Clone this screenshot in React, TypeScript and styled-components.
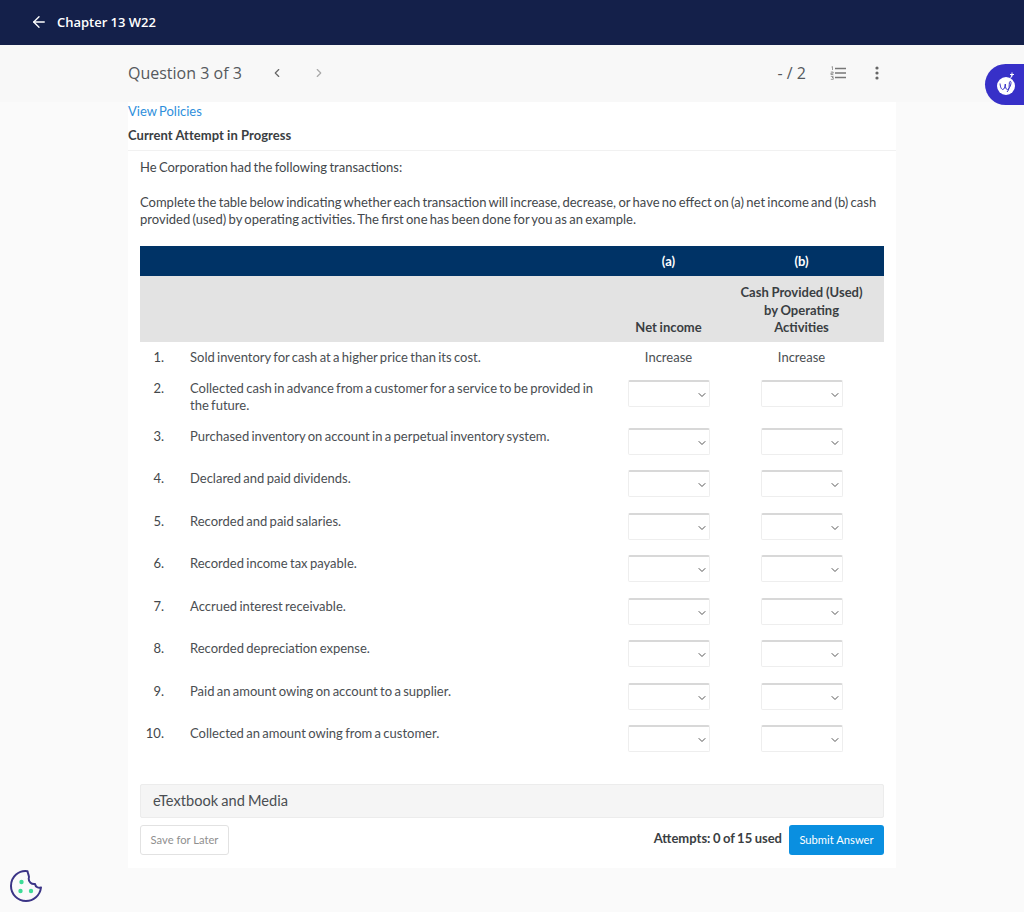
import React from "react";
import styled, { createGlobalStyle } from "styled-components";
import { ArrowLeft, ChevronDown, ChevronLeft, ChevronRight } from "lucide-react";

const GlobalStyle = createGlobalStyle`
  html, body { margin: 0; padding: 0; background: #fafafa; }
  body { font-family: "Lato", "Liberation Sans", sans-serif; color: #43474b; }
  * { box-sizing: border-box; }
`;

const Page = styled.div`
  position: relative;
  width: 1024px;
  height: 912px;
  overflow: hidden;
  background: #fafafa;
`;

const TopBar = styled.header`
  height: 45px;
  background: #14204a;
  display: flex;
  align-items: center;
  gap: 9px;
  padding: 0 0 2px 30px;
  color: #fff;
  font: 600 13px "Open Sans", sans-serif;
  letter-spacing: -0.02px;
`;

const SubBar = styled.div`
  height: 57px;
  background: #f8f8f8;
  padding: 0 143px 2px 128px;
  display: flex;
  align-items: center;
  justify-content: space-between;
`;

const QuestionNav = styled.div`
  display: flex;
  align-items: center;
  color: #55595d;
  font: 400 16px "Open Sans", sans-serif;
`;

const NavButton = styled.span<{ $off?: boolean }>`
  display: flex;
  width: 14px;
  margin-left: 28px;
  color: ${p => (p.$off ? "#a9a9a9" : "#666")};
`;

const Tools = styled.div`
  display: flex;
  align-items: center;
  color: #55595d;
  font: 400 16px "Open Sans", sans-serif;
`;

const Score = styled.span`
  margin-right: 24px;
`;

const ListIcon = styled.svg`
  display: block;
`;

const DotsIcon = styled.svg`
  display: block;
  margin: 0 2px 0 29px;
`;

const Sheet = styled.main`
  width: 768px;
  height: 766px;
  margin-left: 128px;
  background: #fff;
`;

const PolicyLink = styled.a`
  display: block;
  height: 21px;
  font-size: 13px;
  line-height: 18px;
  word-spacing: -1px;
  color: #2f8fdc;
`;

const AttemptHeading = styled.div`
  height: 28px;
  padding-top: 3px;
  border-bottom: 1px solid #f1f1f1;
  font-size: 13px;
  font-weight: 700;
  line-height: 18px;
  letter-spacing: 0.04px;
  color: #3a3e42;
`;

const Content = styled.div`
  padding: 0 12px;
  font-size: 13px;
  line-height: 17.5px;
  word-spacing: -1px;
`;

const Intro = styled.p`
  margin: 8px 0 17px;
`;

const Lead = styled.p`
  margin: 0 0 17px;
  width: 740px;
`;

const TableHead = styled.div`
  display: grid;
  grid-template-columns: 462px 133px 133px 16px;
  height: 30px;
  padding-top: 2px;
  align-items: center;
  background: #003366;
  color: #fff;
  font-weight: 700;
  text-align: center;
`;

const TableSubHead = styled.div`
  display: grid;
  grid-template-columns: 462px 133px 133px 16px;
  height: 66px;
  align-items: end;
  padding-bottom: 5px;
  background: #e3e3e3;
  color: #3a3e42;
  font-weight: 700;
  text-align: center;
  word-spacing: -0.4px;
`;

const HeadCell = styled.div<{ $col: number }>`
  grid-column: ${p => p.$col};
`;

const Row = styled.div<{ $h: number; $top: number }>`
  display: grid;
  grid-template-columns: 50px 412px 133px 133px 16px;
  height: ${p => p.$h}px;
  padding-top: ${p => p.$top}px;
  align-items: start;
`;

const Num = styled.div`
  padding-right: 26px;
  text-align: right;
`;

const RowText = styled.div`
  padding-right: 8px;
  color: #4a4e52;
`;

const Example = styled.div`
  text-align: center;
  color: #4a4e52;
`;

const SelectWrap = styled.div`
  position: relative;
  width: 82px;
  height: 27px;
  margin: 0 auto;
`;

const Select = styled.select`
  appearance: none;
  display: block;
  width: 100%;
  height: 100%;
  background: #fff;
  border: 1px solid #eeeeee;
  border-top: 2px solid #d8d8d8;
  border-radius: 2px;
`;

const Chevron = styled.span`
  position: absolute;
  right: 2px;
  top: 9px;
  display: flex;
  color: #555;
  pointer-events: none;
`;

const MediaBar = styled.div`
  margin-top: 24px;
  height: 34px;
  display: flex;
  align-items: center;
  padding-left: 12px;
  background: #f5f5f5;
  border: 1px solid #ececec;
  border-radius: 2px;
  font-size: 14.6px;
  word-spacing: -0.6px;
  color: #4a4e52;
`;

const Actions = styled.div`
  margin-top: 7px;
  display: flex;
  align-items: center;
  justify-content: space-between;
`;

const SaveButton = styled.button`
  width: 89px;
  height: 30px;
  padding: 0;
  background: #fff;
  border: 1px solid #e2e2e2;
  border-radius: 3px;
  font: 400 11.2px "Lato", sans-serif;
  color: #8f8f8f;
`;

const SubmitGroup = styled.div`
  display: flex;
  align-items: center;
  gap: 7px;
`;

const AttemptCount = styled.span`
  font-size: 13px;
  font-weight: 700;
  margin-top: -2px;
  word-spacing: -0.7px;
  color: #3a3e42;
`;

const SubmitButton = styled.button`
  width: 95px;
  height: 30px;
  padding: 0;
  background: #0a8fe0;
  border: 0;
  border-radius: 3px;
  font: 400 11.2px "Lato", sans-serif;
  color: #fff;
`;

const HelperPill = styled.div`
  position: absolute;
  top: 64px;
  right: 0;
  width: 39px;
  height: 41px;
  padding: 8px 0 0 9px;
  background: #3730c8;
  border-radius: 21px 0 0 21px;
`;

const CookieBadge = styled.div`
  position: absolute;
  left: 9px;
  top: 869px;
`;

const rows = [
  "Collected cash in advance from a customer for a service to be provided in the future.",
  "Purchased inventory on account in a perpetual inventory system.",
  "Declared and paid dividends.",
  "Recorded and paid salaries.",
  "Recorded income tax payable.",
  "Accrued interest receivable.",
  "Recorded depreciation expense.",
  "Paid an amount owing on account to a supplier.",
  "Collected an amount owing from a customer.",
];

const Dropdown = () => (
  <SelectWrap>
    <Select aria-label="answer" />
    <Chevron><ChevronDown size={12} /></Chevron>
  </SelectWrap>
);

export default function App() {
  return (
    <Page>
      <GlobalStyle />
      <TopBar>
        <ArrowLeft size={18} strokeWidth={1.8} />
        <span>Chapter 13 W22</span>
      </TopBar>

      <SubBar>
        <QuestionNav>
          <span>Question 3 of 3</span>
          <NavButton><ChevronLeft size={14} /></NavButton>
          <NavButton $off><ChevronRight size={14} /></NavButton>
        </QuestionNav>
        <Tools>
          <Score>- / 2</Score>
          <ListIcon width="16" height="14" viewBox="0 0 16 14" fill="none" stroke="#777">
            <path d="M5 2.500h11M5 7h11M5 11.500h11" strokeWidth="1.500" />
            <path d="M1.500 1 2.500.6v3.400M.8 6h2.400v1.200H.9v1.300h2.400M.8 10.400h2.500L2 11.500h1.300v1.800H.8" strokeWidth=".7" />
          </ListIcon>
          <DotsIcon width="4" height="14" viewBox="0 0 4 14" fill="#666">
            <circle cx="2" cy="2" r="1.600" />
            <circle cx="2" cy="7" r="1.600" />
            <circle cx="2" cy="12" r="1.600" />
          </DotsIcon>
        </Tools>
      </SubBar>

      <Sheet>
        <PolicyLink>View Policies</PolicyLink>
        <AttemptHeading>Current Attempt in Progress</AttemptHeading>
        <Content>
          <Intro>He Corporation had the following transactions:</Intro>
          <Lead>
            Complete the table below indicating whether each transaction will increase, decrease, or have no effect on (a) net income and (b) cash provided (used) by operating activities. The first one has been done for you as an example.
          </Lead>

          <TableHead>
            <HeadCell $col={2}>(a)</HeadCell>
            <HeadCell $col={3}>(b)</HeadCell>
          </TableHead>
          <TableSubHead>
            <HeadCell $col={2}>Net income</HeadCell>
            <HeadCell $col={3}>Cash Provided (Used)<br />by Operating<br />Activities</HeadCell>
          </TableSubHead>

          <Row $h={30} $top={7}>
            <Num>1.</Num>
            <RowText>Sold inventory for cash at a higher price than its cost.</RowText>
            <Example>Increase</Example>
            <Example>Increase</Example>
          </Row>
          {rows.map((text, i) => (
            <Row key={text} $h={i === 0 ? 48 : 42.5} $top={8}>
              <Num>{i + 2}.</Num>
              <RowText>{text}</RowText>
              <Dropdown />
              <Dropdown />
            </Row>
          ))}

          <MediaBar>eTextbook and Media</MediaBar>
          <Actions>
            <SaveButton>Save for Later</SaveButton>
            <SubmitGroup>
              <AttemptCount>Attempts: 0 of 15 used</AttemptCount>
              <SubmitButton>Submit Answer</SubmitButton>
            </SubmitGroup>
          </Actions>
        </Content>
      </Sheet>

      <HelperPill>
        <svg width="24" height="24" viewBox="0 0 24 24" fill="none">
          <circle cx="12" cy="14" r="9" fill="#fff" />
          <path d="M16.500 6.500 18 3M18 .5v4M16 2.500h4" stroke="#fff" strokeWidth="1" />
          <path d="M6 11.500c.4 4 1.500 6 2.800 6s2.200-2.500 2.500-5.500c0 3.500.7 5.500 2 5.500s3.700-3.500 3.700-7c0-1.500-1.300-1.500-1.600 0-.4 2.500.3 7.500-2.400 9.500" stroke="#3730c8" strokeWidth="1" />
        </svg>
      </HelperPill>

      <CookieBadge>
        <svg width="34" height="34" viewBox="0 0 34 34" fill="none">
          <path d="M18.500 2.200C10 1 2 7.500 2 17c0 8.300 6.700 15 15 15 7.500 0 14-5.500 15-13.500-2.500 1-5.500-.5-6-3.500-3.500.5-6.500-2-6.300-5.500C21 8 19 5.500 18.500 2.200Z" stroke="#3b3486" strokeWidth="2" strokeLinejoin="round" />
          <circle cx="12.500" cy="13" r="2.200" fill="#3ddc97" />
          <circle cx="11.500" cy="22" r="2.200" fill="#3ddc97" />
          <circle cx="22" cy="22" r="2.200" fill="#3ddc97" />
        </svg>
      </CookieBadge>
    </Page>
  );
}
